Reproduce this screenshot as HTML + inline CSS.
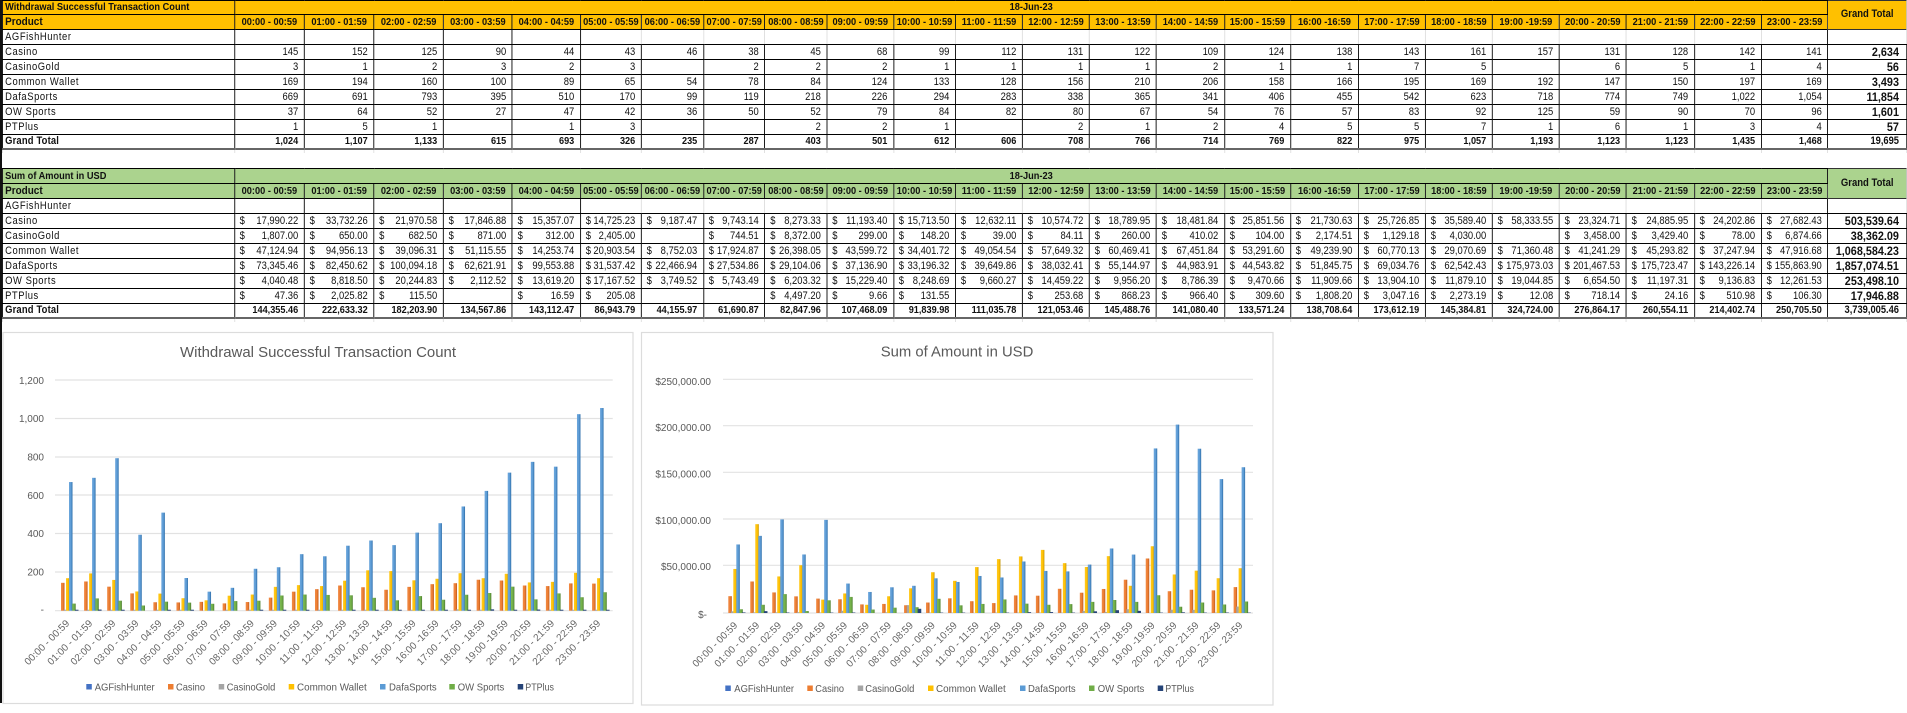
<!DOCTYPE html>
<html lang="en"><head><meta charset="utf-8"><title>Withdrawal Report</title>
<style>
html,body{margin:0;padding:0;background:#fff}
body{width:1907px;height:713px;position:relative;overflow:hidden;font-family:"Liberation Sans",Arial,sans-serif;color:#111}
#edge{position:absolute;left:0;top:0;width:2px;height:703px;background:#111}
table{position:absolute;left:2px;border-collapse:collapse;table-layout:fixed;width:2163.6px;transform:scaleX(.88);transform-origin:0 0;filter:blur(.25px)}
#t1{top:0}#t2{top:168px;left:1.6px}
td{padding:0 6.5px 0 0;border:1px solid #000;text-align:right;white-space:nowrap;overflow:hidden;font-size:10.7px;line-height:13px;height:0}
tr{height:15px}
tr.ti{height:13px}#t2 tr.ti{height:15px}
tr.ti td,tr.h td{font-weight:bold;font-size:10.5px;text-align:center;padding:0}
#t1 tr.ti td,#t1 tr.h td{background:#FFC000}
#t2 tr.ti td,#t2 tr.h td{background:#ABD38E}
td:first-child,tr.ti td:first-child,tr.h td:first-child{text-align:left;padding:0 0 0 2.5px;letter-spacing:.65px}
tr.ti td:first-child{letter-spacing:0}
tr.h td:first-child{font-size:11.3px;letter-spacing:0}
td.gt,tr.ti td.gt{font-size:10.8px;padding-bottom:1px;border-color:#333 #bbb #333 #333}
td:last-child{font-weight:bold;font-size:12.3px;padding-right:8px}
tr.ag td:nth-child(n+7){border-left-color:#ddd;border-right-color:#ddd}
tr.ag td:nth-child(25){border-right-color:#000}
tr.ag td:last-child{padding-right:26px;text-align:right}
tr.g{height:13px}
tr.g td{font-weight:bold;font-size:10.4px;border-bottom:2px solid #666}
tr.g td:first-child{letter-spacing:.2px;font-size:10.7px}
tr.g td:last-child{font-size:10.6px}
tr.k{height:4px}
tr.k td{border:0;border-left:1px solid #ddd;line-height:0;font-size:0;padding:0}
b{float:left;font-weight:normal;margin-left:5.5px}
svg{position:absolute;left:0;top:0;filter:blur(.25px)}
svg text{font-family:"Liberation Sans",Arial,sans-serif;fill:#595959;font-size:10px}
.yl{text-anchor:end}
.xl{text-anchor:end;font-size:10px;fill:#666}
.tl{font-size:15px}
.lg{font-size:10.5px}
.grid{stroke:#e2e2e2;stroke-width:1.2}
rect.a{fill:#4472C4}
rect.c{fill:url(#gc)}rect.l{fill:#A5A5A5}rect.w{fill:url(#gw)}rect.d{fill:url(#gd)}rect.o{fill:url(#go)}rect.p{fill:#264478}
rect.c,rect.l,rect.w,rect.d,rect.o,rect.p{width:3.5px}
#c1 .c{x:6px}#c1 .l{x:8.7px}#c1 .w{x:11px}#c1 .d{x:14px}#c1 .o{x:17.2px}#c1 .p{x:20px}
#c2 .c{x:5.3px}#c2 .l{x:7.9px}#c2 .w{x:10.3px}#c2 .d{x:13.3px}#c2 .o{x:16.3px}#c2 .p{x:19px}
</style></head><body>
<div id="edge"></div>

<table id="t1">
<colgroup><col style="width:263.6px"><col style="width:79.5px"><col style="width:79px"><col style="width:79px"><col style="width:78.4px"><col style="width:77.3px"><col style="width:69.3px"><col style="width:70.5px"><col style="width:69.9px"><col style="width:70.5px"><col style="width:75.6px"><col style="width:70.5px"><col style="width:76.1px"><col style="width:76.1px"><col style="width:76.1px"><col style="width:77.3px"><col style="width:75px"><col style="width:77.3px"><col style="width:76.1px"><col style="width:76.1px"><col style="width:76.1px"><col style="width:76.1px"><col style="width:77.3px"><col style="width:76.1px"><col style="width:75.6px"><col style="width:89.2px"></colgroup>
<tr class="ti"><td>Withdrawal Successful Transaction Count<td colspan="24">18-Jun-23<td rowspan="2" class="gt">Grand Total
<tr class="h"><td>Product<td>00:00 - 00:59<td>01:00 - 01:59<td>02:00 - 02:59<td>03:00 - 03:59<td>04:00 - 04:59<td>05:00 - 05:59<td>06:00 - 06:59<td>07:00 - 07:59<td>08:00 - 08:59<td>09:00 - 09:59<td>10:00 - 10:59<td>11:00 - 11:59<td>12:00 - 12:59<td>13:00 - 13:59<td>14:00 - 14:59<td>15:00 - 15:59<td>16:00 -16:59<td>17:00 - 17:59<td>18:00 - 18:59<td>19:00 -19:59<td>20:00 - 20:59<td>21:00 - 21:59<td>22:00 - 22:59<td>23:00 - 23:59
<tr class="ag"><td>AGFishHunter<td><td><td><td><td><td><td><td><td><td><td><td><td><td><td><td><td><td><td><td><td><td><td><td><td><td>-
<tr><td>Casino<td>145<td>152<td>125<td>90<td>44<td>43<td>46<td>38<td>45<td>68<td>99<td>112<td>131<td>122<td>109<td>124<td>138<td>143<td>161<td>157<td>131<td>128<td>142<td>141<td>2,634
<tr><td>CasinoGold<td>3<td>1<td>2<td>3<td>2<td>3<td><td>2<td>2<td>2<td>1<td>1<td>1<td>1<td>2<td>1<td>1<td>7<td>5<td><td>6<td>5<td>1<td>4<td>56
<tr><td>Common Wallet<td>169<td>194<td>160<td>100<td>89<td>65<td>54<td>78<td>84<td>124<td>133<td>128<td>156<td>210<td>206<td>158<td>166<td>195<td>169<td>192<td>147<td>150<td>197<td>169<td>3,493
<tr><td>DafaSports<td>669<td>691<td>793<td>395<td>510<td>170<td>99<td>119<td>218<td>226<td>294<td>283<td>338<td>365<td>341<td>406<td>455<td>542<td>623<td>718<td>774<td>749<td>1,022<td>1,054<td>11,854
<tr><td>OW Sports<td>37<td>64<td>52<td>27<td>47<td>42<td>36<td>50<td>52<td>79<td>84<td>82<td>80<td>67<td>54<td>76<td>57<td>83<td>92<td>125<td>59<td>90<td>70<td>96<td>1,601
<tr><td>PTPlus<td>1<td>5<td>1<td><td>1<td>3<td><td><td>2<td>2<td>1<td><td>2<td>1<td>2<td>4<td>5<td>5<td>7<td>1<td>6<td>1<td>3<td>4<td>57
<tr class="g"><td>Grand Total<td>1,024<td>1,107<td>1,133<td>615<td>693<td>326<td>235<td>287<td>403<td>501<td>612<td>606<td>708<td>766<td>714<td>769<td>822<td>975<td>1,057<td>1,193<td>1,123<td>1,123<td>1,435<td>1,468<td>19,695
<tr class="k"><td><td><td><td><td><td><td><td><td><td><td><td><td><td><td><td><td><td><td><td><td><td><td><td><td><td><td>
</table>

<table id="t2">
<colgroup><col style="width:263.6px"><col style="width:79.5px"><col style="width:79px"><col style="width:79px"><col style="width:78.4px"><col style="width:77.3px"><col style="width:69.3px"><col style="width:70.5px"><col style="width:69.9px"><col style="width:70.5px"><col style="width:75.6px"><col style="width:70.5px"><col style="width:76.1px"><col style="width:76.1px"><col style="width:76.1px"><col style="width:77.3px"><col style="width:75px"><col style="width:77.3px"><col style="width:76.1px"><col style="width:76.1px"><col style="width:76.1px"><col style="width:76.1px"><col style="width:77.3px"><col style="width:76.1px"><col style="width:75.6px"><col style="width:89.2px"></colgroup>
<tr class="ti"><td>Sum of Amount in USD<td colspan="24">18-Jun-23<td rowspan="2" class="gt">Grand Total
<tr class="h"><td>Product<td>00:00 - 00:59<td>01:00 - 01:59<td>02:00 - 02:59<td>03:00 - 03:59<td>04:00 - 04:59<td>05:00 - 05:59<td>06:00 - 06:59<td>07:00 - 07:59<td>08:00 - 08:59<td>09:00 - 09:59<td>10:00 - 10:59<td>11:00 - 11:59<td>12:00 - 12:59<td>13:00 - 13:59<td>14:00 - 14:59<td>15:00 - 15:59<td>16:00 -16:59<td>17:00 - 17:59<td>18:00 - 18:59<td>19:00 -19:59<td>20:00 - 20:59<td>21:00 - 21:59<td>22:00 - 22:59<td>23:00 - 23:59
<tr class="ag"><td>AGFishHunter<td><td><td><td><td><td><td><td><td><td><td><td><td><td><td><td><td><td><td><td><td><td><td><td><td><td>-
<tr><td>Casino<td><b>$</b>17,990.22<td><b>$</b>33,732.26<td><b>$</b>21,970.58<td><b>$</b>17,846.88<td><b>$</b>15,357.07<td><b>$</b>14,725.23<td><b>$</b>9,187.47<td><b>$</b>9,743.14<td><b>$</b>8,273.33<td><b>$</b>11,193.40<td><b>$</b>15,713.50<td><b>$</b>12,632.11<td><b>$</b>10,574.72<td><b>$</b>18,789.95<td><b>$</b>18,481.84<td><b>$</b>25,851.56<td><b>$</b>21,730.63<td><b>$</b>25,726.85<td><b>$</b>35,589.40<td><b>$</b>58,333.55<td><b>$</b>23,324.71<td><b>$</b>24,885.95<td><b>$</b>24,202.86<td><b>$</b>27,682.43<td>503,539.64
<tr><td>CasinoGold<td><b>$</b>1,807.00<td><b>$</b>650.00<td><b>$</b>682.50<td><b>$</b>871.00<td><b>$</b>312.00<td><b>$</b>2,405.00<td><td><b>$</b>744.51<td><b>$</b>8,372.00<td><b>$</b>299.00<td><b>$</b>148.20<td><b>$</b>39.00<td><b>$</b>84.11<td><b>$</b>260.00<td><b>$</b>410.02<td><b>$</b>104.00<td><b>$</b>2,174.51<td><b>$</b>1,129.18<td><b>$</b>4,030.00<td><td><b>$</b>3,458.00<td><b>$</b>3,429.40<td><b>$</b>78.00<td><b>$</b>6,874.66<td>38,362.09
<tr><td>Common Wallet<td><b>$</b>47,124.94<td><b>$</b>94,956.13<td><b>$</b>39,096.31<td><b>$</b>51,115.55<td><b>$</b>14,253.74<td><b>$</b>20,903.54<td><b>$</b>8,752.03<td><b>$</b>17,924.87<td><b>$</b>26,398.05<td><b>$</b>43,599.72<td><b>$</b>34,401.72<td><b>$</b>49,054.54<td><b>$</b>57,649.32<td><b>$</b>60,469.41<td><b>$</b>67,451.84<td><b>$</b>53,291.60<td><b>$</b>49,239.90<td><b>$</b>60,770.13<td><b>$</b>29,070.69<td><b>$</b>71,360.48<td><b>$</b>41,241.29<td><b>$</b>45,293.82<td><b>$</b>37,247.94<td><b>$</b>47,916.68<td>1,068,584.23
<tr><td>DafaSports<td><b>$</b>73,345.46<td><b>$</b>82,450.62<td><b>$</b>100,094.18<td><b>$</b>62,621.91<td><b>$</b>99,553.88<td><b>$</b>31,537.42<td><b>$</b>22,466.94<td><b>$</b>27,534.86<td><b>$</b>29,104.06<td><b>$</b>37,136.90<td><b>$</b>33,196.32<td><b>$</b>39,649.86<td><b>$</b>38,032.41<td><b>$</b>55,144.97<td><b>$</b>44,983.91<td><b>$</b>44,543.82<td><b>$</b>51,845.75<td><b>$</b>69,034.76<td><b>$</b>62,542.43<td><b>$</b>175,973.03<td><b>$</b>201,467.53<td><b>$</b>175,723.47<td><b>$</b>143,226.14<td><b>$</b>155,863.90<td>1,857,074.51
<tr><td>OW Sports<td><b>$</b>4,040.48<td><b>$</b>8,818.50<td><b>$</b>20,244.83<td><b>$</b>2,112.52<td><b>$</b>13,619.20<td><b>$</b>17,167.52<td><b>$</b>3,749.52<td><b>$</b>5,743.49<td><b>$</b>6,203.32<td><b>$</b>15,229.40<td><b>$</b>8,248.69<td><b>$</b>9,660.27<td><b>$</b>14,459.22<td><b>$</b>9,956.20<td><b>$</b>8,786.39<td><b>$</b>9,470.66<td><b>$</b>11,909.66<td><b>$</b>13,904.10<td><b>$</b>11,879.10<td><b>$</b>19,044.85<td><b>$</b>6,654.50<td><b>$</b>11,197.31<td><b>$</b>9,136.83<td><b>$</b>12,261.53<td>253,498.10
<tr><td>PTPlus<td><b>$</b>47.36<td><b>$</b>2,025.82<td><b>$</b>115.50<td><td><b>$</b>16.59<td><b>$</b>205.08<td><td><td><b>$</b>4,497.20<td><b>$</b>9.66<td><b>$</b>131.55<td><td><b>$</b>253.68<td><b>$</b>868.23<td><b>$</b>966.40<td><b>$</b>309.60<td><b>$</b>1,808.20<td><b>$</b>3,047.16<td><b>$</b>2,273.19<td><b>$</b>12.08<td><b>$</b>718.14<td><b>$</b>24.16<td><b>$</b>510.98<td><b>$</b>106.30<td>17,946.88
<tr class="g"><td>Grand Total<td>144,355.46<td>222,633.32<td>182,203.90<td>134,567.86<td>143,112.47<td>86,943.79<td>44,155.97<td>61,690.87<td>82,847.96<td>107,468.09<td>91,839.98<td>111,035.78<td>121,053.46<td>145,488.76<td>141,080.40<td>133,571.24<td>138,708.64<td>173,612.19<td>145,384.81<td>324,724.00<td>276,864.17<td>260,554.11<td>214,402.74<td>250,705.50<td>3,739,005.46
<tr class="k"><td><td><td><td><td><td><td><td><td><td><td><td><td><td><td><td><td><td><td><td><td><td><td><td><td><td><td>
</table>

<svg width="1907" height="713" viewBox="0 0 1907 713" xmlns="http://www.w3.org/2000/svg">
<defs>
<linearGradient id="gc"><stop offset="0" stop-color="#F08A45"/><stop offset=".6" stop-color="#ED7D31"/><stop offset="1" stop-color="#B9581C"/></linearGradient>
<linearGradient id="gw"><stop offset="0" stop-color="#FFC91F"/><stop offset=".65" stop-color="#FFC000"/><stop offset="1" stop-color="#B98B00"/></linearGradient>
<linearGradient id="gd"><stop offset="0" stop-color="#6CA6DC"/><stop offset=".6" stop-color="#5B9BD5"/><stop offset="1" stop-color="#2B6AA5"/></linearGradient>
<linearGradient id="go"><stop offset="0" stop-color="#7DBA52"/><stop offset=".6" stop-color="#70AD47"/><stop offset="1" stop-color="#4A7A2D"/></linearGradient>
</defs>

<!-- Chart 1 -->
<rect x="3" y="332.5" width="630" height="371" fill="#fff" stroke="#dcdcdc" stroke-width="1.2"/>
<text class="tl" x="180" y="357" textLength="276" lengthAdjust="spacingAndGlyphs">Withdrawal Successful Transaction Count</text>
<g class="grid"><path d="M55 380H612.7M55 418.5H612.7M55 457H612.7M55 495H612.7M55 533.5H612.7M55 572H612.7M55 610.7H612.7" fill="none"/></g>
<g class="yl"><text x="44" y="384">1,200</text><text x="44" y="422">1,000</text><text x="44" y="460.5">800</text><text x="44" y="499">600</text><text x="44" y="537">400</text><text x="44" y="575.5">200</text><text x="44" y="613">-</text></g>
<g id="c1" transform="translate(55,610.7) scale(1,-.1923)">
<g transform="translate(0)"><rect class="c" height="145"/><rect class="l" height="5"/><rect class="w" height="169"/><rect class="d" height="669"/><rect class="o" height="37"/><rect class="p" height="5"/></g>
<g transform="translate(23.09)"><rect class="c" height="152"/><rect class="l" height="5"/><rect class="w" height="194"/><rect class="d" height="691"/><rect class="o" height="64"/><rect class="p" height="6"/></g>
<g transform="translate(46.18)"><rect class="c" height="125"/><rect class="l" height="5"/><rect class="w" height="160"/><rect class="d" height="793"/><rect class="o" height="52"/><rect class="p" height="5"/></g>
<g transform="translate(69.27)"><rect class="c" height="90"/><rect class="l" height="5"/><rect class="w" height="100"/><rect class="d" height="395"/><rect class="o" height="27"/></g>
<g transform="translate(92.36)"><rect class="c" height="44"/><rect class="l" height="5"/><rect class="w" height="89"/><rect class="d" height="510"/><rect class="o" height="47"/><rect class="p" height="5"/></g>
<g transform="translate(115.45)"><rect class="c" height="43"/><rect class="l" height="5"/><rect class="w" height="65"/><rect class="d" height="170"/><rect class="o" height="42"/><rect class="p" height="5"/></g>
<g transform="translate(138.54)"><rect class="c" height="46"/><rect class="w" height="54"/><rect class="d" height="99"/><rect class="o" height="36"/></g>
<g transform="translate(161.63)"><rect class="c" height="38"/><rect class="l" height="5"/><rect class="w" height="78"/><rect class="d" height="119"/><rect class="o" height="50"/></g>
<g transform="translate(184.72)"><rect class="c" height="45"/><rect class="l" height="5"/><rect class="w" height="84"/><rect class="d" height="218"/><rect class="o" height="52"/><rect class="p" height="5"/></g>
<g transform="translate(207.81)"><rect class="c" height="68"/><rect class="l" height="5"/><rect class="w" height="124"/><rect class="d" height="226"/><rect class="o" height="79"/><rect class="p" height="5"/></g>
<g transform="translate(230.9)"><rect class="c" height="99"/><rect class="l" height="5"/><rect class="w" height="133"/><rect class="d" height="294"/><rect class="o" height="84"/><rect class="p" height="5"/></g>
<g transform="translate(253.99)"><rect class="c" height="112"/><rect class="l" height="5"/><rect class="w" height="128"/><rect class="d" height="283"/><rect class="o" height="82"/></g>
<g transform="translate(277.08)"><rect class="c" height="131"/><rect class="l" height="5"/><rect class="w" height="156"/><rect class="d" height="338"/><rect class="o" height="80"/><rect class="p" height="5"/></g>
<g transform="translate(300.17)"><rect class="c" height="122"/><rect class="l" height="5"/><rect class="w" height="210"/><rect class="d" height="365"/><rect class="o" height="67"/><rect class="p" height="5"/></g>
<g transform="translate(323.26)"><rect class="c" height="109"/><rect class="l" height="5"/><rect class="w" height="206"/><rect class="d" height="341"/><rect class="o" height="54"/><rect class="p" height="5"/></g>
<g transform="translate(346.35)"><rect class="c" height="124"/><rect class="l" height="5"/><rect class="w" height="158"/><rect class="d" height="406"/><rect class="o" height="76"/><rect class="p" height="5"/></g>
<g transform="translate(369.44)"><rect class="c" height="138"/><rect class="l" height="5"/><rect class="w" height="166"/><rect class="d" height="455"/><rect class="o" height="57"/><rect class="p" height="5"/></g>
<g transform="translate(392.53)"><rect class="c" height="143"/><rect class="l" height="7"/><rect class="w" height="195"/><rect class="d" height="542"/><rect class="o" height="83"/><rect class="p" height="5"/></g>
<g transform="translate(415.62)"><rect class="c" height="161"/><rect class="l" height="5"/><rect class="w" height="169"/><rect class="d" height="623"/><rect class="o" height="92"/><rect class="p" height="7"/></g>
<g transform="translate(438.71)"><rect class="c" height="157"/><rect class="w" height="192"/><rect class="d" height="718"/><rect class="o" height="125"/><rect class="p" height="5"/></g>
<g transform="translate(461.8)"><rect class="c" height="131"/><rect class="l" height="6"/><rect class="w" height="147"/><rect class="d" height="774"/><rect class="o" height="59"/><rect class="p" height="6"/></g>
<g transform="translate(484.89)"><rect class="c" height="128"/><rect class="l" height="5"/><rect class="w" height="150"/><rect class="d" height="749"/><rect class="o" height="90"/><rect class="p" height="5"/></g>
<g transform="translate(507.98)"><rect class="c" height="142"/><rect class="l" height="5"/><rect class="w" height="197"/><rect class="d" height="1022"/><rect class="o" height="70"/><rect class="p" height="5"/></g>
<g transform="translate(531.07)"><rect class="c" height="141"/><rect class="l" height="5"/><rect class="w" height="169"/><rect class="d" height="1054"/><rect class="o" height="96"/><rect class="p" height="5"/></g>
</g>
<g>
<text class="xl" transform="translate(70 624) rotate(-45)">00:00 - 00:59</text>
<text class="xl" transform="translate(93.1 624) rotate(-45)">01:00 - 01:59</text>
<text class="xl" transform="translate(116.2 624) rotate(-45)">02:00 - 02:59</text>
<text class="xl" transform="translate(139.3 624) rotate(-45)">03:00 - 03:59</text>
<text class="xl" transform="translate(162.4 624) rotate(-45)">04:00 - 04:59</text>
<text class="xl" transform="translate(185.5 624) rotate(-45)">05:00 - 05:59</text>
<text class="xl" transform="translate(208.5 624) rotate(-45)">06:00 - 06:59</text>
<text class="xl" transform="translate(231.6 624) rotate(-45)">07:00 - 07:59</text>
<text class="xl" transform="translate(254.7 624) rotate(-45)">08:00 - 08:59</text>
<text class="xl" transform="translate(277.8 624) rotate(-45)">09:00 - 09:59</text>
<text class="xl" transform="translate(300.9 624) rotate(-45)">10:00 - 10:59</text>
<text class="xl" transform="translate(324 624) rotate(-45)">11:00 - 11:59</text>
<text class="xl" transform="translate(347.1 624) rotate(-45)">12:00 - 12:59</text>
<text class="xl" transform="translate(370.2 624) rotate(-45)">13:00 - 13:59</text>
<text class="xl" transform="translate(393.3 624) rotate(-45)">14:00 - 14:59</text>
<text class="xl" transform="translate(416.4 624) rotate(-45)">15:00 - 15:59</text>
<text class="xl" transform="translate(439.4 624) rotate(-45)">16:00 -16:59</text>
<text class="xl" transform="translate(462.5 624) rotate(-45)">17:00 - 17:59</text>
<text class="xl" transform="translate(485.6 624) rotate(-45)">18:00 - 18:59</text>
<text class="xl" transform="translate(508.7 624) rotate(-45)">19:00 -19:59</text>
<text class="xl" transform="translate(531.8 624) rotate(-45)">20:00 - 20:59</text>
<text class="xl" transform="translate(554.9 624) rotate(-45)">21:00 - 21:59</text>
<text class="xl" transform="translate(578 624) rotate(-45)">22:00 - 22:59</text>
<text class="xl" transform="translate(601.1 624) rotate(-45)">23:00 - 23:59</text>
</g>
<g>
<rect x="86.3" y="684" width="5.5" height="5.5" fill="#4472C4"/><text class="lg" x="94.7" y="690.5" textLength="60" lengthAdjust="spacingAndGlyphs">AGFishHunter</text>
<rect x="168" y="684" width="5.5" height="5.5" fill="#ED7D31"/><text class="lg" x="176" y="690.5" textLength="29" lengthAdjust="spacingAndGlyphs">Casino</text>
<rect x="218.7" y="684" width="5.5" height="5.5" fill="#A5A5A5"/><text class="lg" x="226.7" y="690.5" textLength="48.6" lengthAdjust="spacingAndGlyphs">CasinoGold</text>
<rect x="288.7" y="684" width="5.5" height="5.5" fill="#FFC000"/><text class="lg" x="297" y="690.5" textLength="69.7" lengthAdjust="spacingAndGlyphs">Common Wallet</text>
<rect x="380" y="684" width="5.5" height="5.5" fill="#5B9BD5"/><text class="lg" x="389" y="690.5" textLength="47.7" lengthAdjust="spacingAndGlyphs">DafaSports</text>
<rect x="449.3" y="684" width="5.5" height="5.5" fill="#70AD47"/><text class="lg" x="457.7" y="690.5" textLength="46.6" lengthAdjust="spacingAndGlyphs">OW Sports</text>
<rect x="517.7" y="684" width="5.5" height="5.5" fill="#264478"/><text class="lg" x="525.3" y="690.5" textLength="28.7" lengthAdjust="spacingAndGlyphs">PTPlus</text>
</g>

<!-- Chart 2 -->
<rect x="641.5" y="332.5" width="631.5" height="372.5" fill="#fff" stroke="#dcdcdc" stroke-width="1.2"/>
<text class="tl" x="880.7" y="356.5" textLength="152.6" lengthAdjust="spacingAndGlyphs">Sum of Amount in USD</text>
<g class="grid"><path d="M723 379.3H1253M723 425.7H1253M723 472.3H1253M723 519H1253M723 565.3H1253M723 613H1253" fill="none"/></g>
<g class="yl"><text x="711" y="385">$250,000.00</text><text x="711" y="431">$200,000.00</text><text x="711" y="477.5">$150,000.00</text><text x="711" y="524">$100,000.00</text><text x="711" y="570">$50,000.00</text><text x="707" y="618">$-</text></g>
<g id="c2" transform="translate(723,613) scale(1,-.935)">
<g transform="translate(0)"><rect class="c" height="18"/><rect class="l" height="1.8"/><rect class="w" height="47.1"/><rect class="d" height="73.3"/><rect class="o" height="4"/><rect class="p" height=".6"/></g>
<g transform="translate(21.97)"><rect class="c" height="33.7"/><rect class="l" height=".65"/><rect class="w" height="95"/><rect class="d" height="82.5"/><rect class="o" height="8.8"/><rect class="p" height="2"/></g>
<g transform="translate(43.94)"><rect class="c" height="22"/><rect class="l" height=".68"/><rect class="w" height="39.1"/><rect class="d" height="100.1"/><rect class="o" height="20.2"/><rect class="p" height=".5"/></g>
<g transform="translate(65.91)"><rect class="c" height="17.8"/><rect class="l" height=".87"/><rect class="w" height="51.1"/><rect class="d" height="62.6"/><rect class="o" height="2.1"/></g>
<g transform="translate(87.88)"><rect class="c" height="15.4"/><rect class="l" height=".5"/><rect class="w" height="14.3"/><rect class="d" height="99.6"/><rect class="o" height="13.6"/><rect class="p" height=".4"/></g>
<g transform="translate(109.85)"><rect class="c" height="14.7"/><rect class="l" height="2.4"/><rect class="w" height="20.9"/><rect class="d" height="31.5"/><rect class="o" height="17.2"/><rect class="p" height=".5"/></g>
<g transform="translate(131.82)"><rect class="c" height="9.2"/><rect class="w" height="8.8"/><rect class="d" height="22.5"/><rect class="o" height="3.7"/></g>
<g transform="translate(153.79)"><rect class="c" height="9.7"/><rect class="l" height=".74"/><rect class="w" height="17.9"/><rect class="d" height="27.5"/><rect class="o" height="5.7"/></g>
<g transform="translate(175.76)"><rect class="c" height="8.3"/><rect class="l" height="8.4"/><rect class="w" height="26.4"/><rect class="d" height="29.1"/><rect class="o" height="6.2"/><rect class="p" height="4.5"/></g>
<g transform="translate(197.73)"><rect class="c" height="11.2"/><rect class="l" height=".4"/><rect class="w" height="43.6"/><rect class="d" height="37.1"/><rect class="o" height="15.2"/><rect class="p" height=".4"/></g>
<g transform="translate(219.7)"><rect class="c" height="15.7"/><rect class="l" height=".4"/><rect class="w" height="34.4"/><rect class="d" height="33.2"/><rect class="o" height="8.2"/><rect class="p" height=".4"/></g>
<g transform="translate(241.67)"><rect class="c" height="12.6"/><rect class="w" height="49.1"/><rect class="d" height="39.6"/><rect class="o" height="9.7"/></g>
<g transform="translate(263.64)"><rect class="c" height="10.6"/><rect class="l" height=".4"/><rect class="w" height="57.6"/><rect class="d" height="38"/><rect class="o" height="14.5"/><rect class="p" height=".4"/></g>
<g transform="translate(285.61)"><rect class="c" height="18.8"/><rect class="l" height=".4"/><rect class="w" height="60.5"/><rect class="d" height="55.1"/><rect class="o" height="10"/><rect class="p" height=".87"/></g>
<g transform="translate(307.58)"><rect class="c" height="18.5"/><rect class="l" height=".41"/><rect class="w" height="67.5"/><rect class="d" height="45"/><rect class="o" height="8.8"/><rect class="p" height=".97"/></g>
<g transform="translate(329.55)"><rect class="c" height="25.9"/><rect class="l" height=".4"/><rect class="w" height="53.3"/><rect class="d" height="44.5"/><rect class="o" height="9.5"/><rect class="p" height=".4"/></g>
<g transform="translate(351.52)"><rect class="c" height="21.7"/><rect class="l" height="2.2"/><rect class="w" height="49.2"/><rect class="d" height="51.8"/><rect class="o" height="11.9"/><rect class="p" height="1.8"/></g>
<g transform="translate(373.49)"><rect class="c" height="25.7"/><rect class="l" height="1.1"/><rect class="w" height="60.8"/><rect class="d" height="69"/><rect class="o" height="13.9"/><rect class="p" height="3"/></g>
<g transform="translate(395.46)"><rect class="c" height="35.6"/><rect class="l" height="4"/><rect class="w" height="29.1"/><rect class="d" height="62.5"/><rect class="o" height="11.9"/><rect class="p" height="2.3"/></g>
<g transform="translate(417.43)"><rect class="c" height="58.3"/><rect class="w" height="71.4"/><rect class="d" height="176"/><rect class="o" height="19"/><rect class="p" height=".4"/></g>
<g transform="translate(439.4)"><rect class="c" height="23.3"/><rect class="l" height="3.5"/><rect class="w" height="41.2"/><rect class="d" height="201.5"/><rect class="o" height="6.7"/><rect class="p" height=".72"/></g>
<g transform="translate(461.37)"><rect class="c" height="24.9"/><rect class="l" height="3.4"/><rect class="w" height="45.3"/><rect class="d" height="175.7"/><rect class="o" height="11.2"/><rect class="p" height=".4"/></g>
<g transform="translate(483.34)"><rect class="c" height="24.2"/><rect class="l" height=".4"/><rect class="w" height="37.2"/><rect class="d" height="143.2"/><rect class="o" height="9.1"/><rect class="p" height=".51"/></g>
<g transform="translate(505.31)"><rect class="c" height="27.7"/><rect class="l" height="6.9"/><rect class="w" height="47.9"/><rect class="d" height="155.9"/><rect class="o" height="12.3"/><rect class="p" height=".4"/></g>
</g>
<g>
<text class="xl" transform="translate(738 626) rotate(-45)">00:00 - 00:59</text>
<text class="xl" transform="translate(760 626) rotate(-45)">01:00 - 01:59</text>
<text class="xl" transform="translate(781.9 626) rotate(-45)">02:00 - 02:59</text>
<text class="xl" transform="translate(803.9 626) rotate(-45)">03:00 - 03:59</text>
<text class="xl" transform="translate(825.9 626) rotate(-45)">04:00 - 04:59</text>
<text class="xl" transform="translate(847.9 626) rotate(-45)">05:00 - 05:59</text>
<text class="xl" transform="translate(869.8 626) rotate(-45)">06:00 - 06:59</text>
<text class="xl" transform="translate(891.8 626) rotate(-45)">07:00 - 07:59</text>
<text class="xl" transform="translate(913.8 626) rotate(-45)">08:00 - 08:59</text>
<text class="xl" transform="translate(935.7 626) rotate(-45)">09:00 - 09:59</text>
<text class="xl" transform="translate(957.7 626) rotate(-45)">10:00 - 10:59</text>
<text class="xl" transform="translate(979.7 626) rotate(-45)">11:00 - 11:59</text>
<text class="xl" transform="translate(1001.6 626) rotate(-45)">12:00 - 12:59</text>
<text class="xl" transform="translate(1023.6 626) rotate(-45)">13:00 - 13:59</text>
<text class="xl" transform="translate(1045.6 626) rotate(-45)">14:00 - 14:59</text>
<text class="xl" transform="translate(1067.6 626) rotate(-45)">15:00 - 15:59</text>
<text class="xl" transform="translate(1089.5 626) rotate(-45)">16:00 -16:59</text>
<text class="xl" transform="translate(1111.5 626) rotate(-45)">17:00 - 17:59</text>
<text class="xl" transform="translate(1133.5 626) rotate(-45)">18:00 - 18:59</text>
<text class="xl" transform="translate(1155.4 626) rotate(-45)">19:00 -19:59</text>
<text class="xl" transform="translate(1177.4 626) rotate(-45)">20:00 - 20:59</text>
<text class="xl" transform="translate(1199.4 626) rotate(-45)">21:00 - 21:59</text>
<text class="xl" transform="translate(1221.3 626) rotate(-45)">22:00 - 22:59</text>
<text class="xl" transform="translate(1243.3 626) rotate(-45)">23:00 - 23:59</text>
</g>
<g>
<rect x="725.3" y="685.5" width="5.5" height="5.5" fill="#4472C4"/><text class="lg" x="734.3" y="692" textLength="59.7" lengthAdjust="spacingAndGlyphs">AGFishHunter</text>
<rect x="807.3" y="685.5" width="5.5" height="5.5" fill="#ED7D31"/><text class="lg" x="815.3" y="692" textLength="28.7" lengthAdjust="spacingAndGlyphs">Casino</text>
<rect x="857.7" y="685.5" width="5.5" height="5.5" fill="#A5A5A5"/><text class="lg" x="865.3" y="692" textLength="49" lengthAdjust="spacingAndGlyphs">CasinoGold</text>
<rect x="928" y="685.5" width="5.5" height="5.5" fill="#FFC000"/><text class="lg" x="936" y="692" textLength="69.7" lengthAdjust="spacingAndGlyphs">Common Wallet</text>
<rect x="1020" y="685.5" width="5.5" height="5.5" fill="#5B9BD5"/><text class="lg" x="1028" y="692" textLength="47.7" lengthAdjust="spacingAndGlyphs">DafaSports</text>
<rect x="1089" y="685.5" width="5.5" height="5.5" fill="#70AD47"/><text class="lg" x="1097.7" y="692" textLength="46.6" lengthAdjust="spacingAndGlyphs">OW Sports</text>
<rect x="1157.7" y="685.5" width="5.5" height="5.5" fill="#264478"/><text class="lg" x="1165.3" y="692" textLength="28.7" lengthAdjust="spacingAndGlyphs">PTPlus</text>
</g>
</svg>
</body></html>
